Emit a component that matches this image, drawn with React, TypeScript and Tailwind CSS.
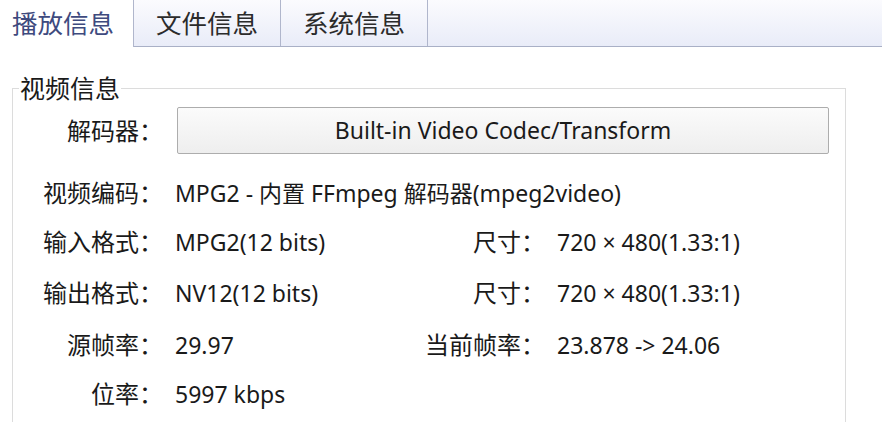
import React from 'react';

const font = { fontFamily: '"Noto Sans", "Noto Sans CJK SC", sans-serif' };

const tabs = ['播放信息', '文件信息', '系统信息'];

function Row({ h, label, value, label2, value2 }: { h: string; label: string; value: string; label2?: string; value2?: string }) {
    return (
        <div className={`flex items-center ${h}`}>
            <span className="w-[150px] text-right text-[24px] whitespace-nowrap">{label}</span>
            <span className="ml-[12px] w-[250px] text-[23px] whitespace-nowrap">{value}</span>
            {label2 && <span className="w-[120px] text-right text-[24px] whitespace-nowrap">{label2}</span>}
            {value2 && <span className="ml-[12px] text-[23px] whitespace-nowrap">{value2}</span>}
        </div>
    );
}

export default function App() {
    return (
        <div className="w-[882px] h-[422px] overflow-hidden bg-white text-[#1a1a1a]" style={font}>
            <div className="flex h-[47px] border-b border-[#a9b0c6] bg-gradient-to-b from-[#fbfbfe] to-[#e9ecf8]">
                {tabs.map((t, i) => (
                    <div
                        key={t}
                        className={
                            i === 0
                                ? 'w-[134px] h-[47px] pl-[12px] flex items-center bg-white text-[25.5px] text-[#3e4a7e] border-r border-[#b0b6cc]'
                                : 'w-[147px] flex items-center justify-center text-[25.5px] text-[#2b2b2b] border-r border-[#b0b6cc]'
                        }
                    >
                        {t}
                    </div>
                ))}
            </div>

            <div className="pt-[26px] pl-[12px]">
                <fieldset className="w-[834px] h-[400px] border border-[#dcdcdc]">
                    <legend className="ml-[6px] px-[1px] text-[25px] leading-[30px]">视频信息</legend>
                    <div>
                        <div className="flex items-center mt-[4px] h-[47px]">
                            <span className="w-[150px] text-right text-[24px] whitespace-nowrap">解码器：</span>
                            <button className="ml-[14px] w-[652px] h-[47px] rounded-[2px] border border-[#adadad] bg-gradient-to-b from-[#fbfbfb] to-[#eeeeee] text-[23px] text-[#1a1a1a]">
                                Built-in Video Codec/Transform
                            </button>
                        </div>
                        <div className="h-[15px]" />
                        <Row h="h-[48px]" label="视频编码：" value="MPG2 - 内置 FFmpeg 解码器(mpeg2video)" />
                        <Row h="h-[50px]" label="输入格式：" value="MPG2(12 bits)" label2="尺寸：" value2="720 × 480(1.33:1)" />
                        <Row h="h-[52px]" label="输出格式：" value="NV12(12 bits)" label2="尺寸：" value2="720 × 480(1.33:1)" />
                        <Row h="h-[52px]" label="源帧率：" value="29.97" label2="当前帧率：" value2="23.878 -> 24.06" />
                        <Row h="h-[46px]" label="位率：" value="5997 kbps" />
                    </div>
                </fieldset>
            </div>
        </div>
    );
}
